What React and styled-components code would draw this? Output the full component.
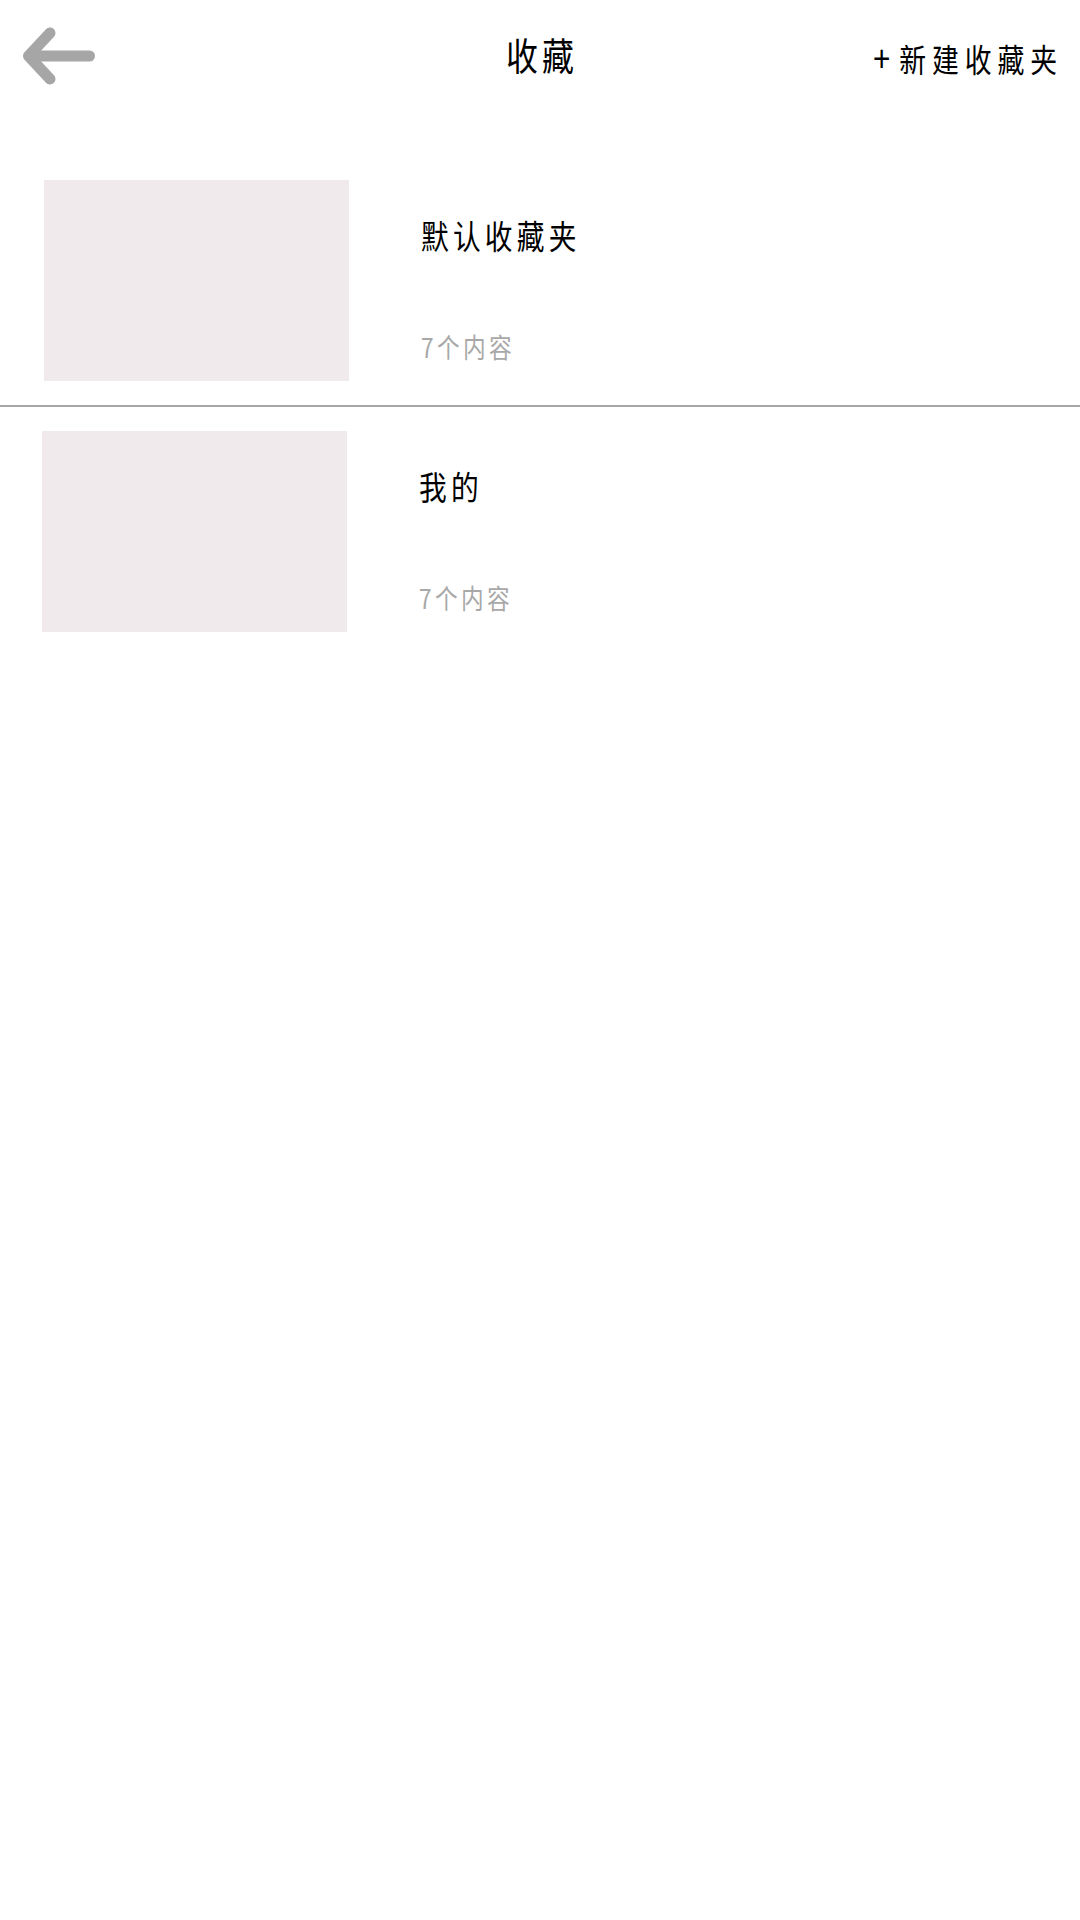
import React from "react";
import styled, { createGlobalStyle } from "styled-components";

const GlobalStyle = createGlobalStyle`
  html, body {
    margin: 0;
    padding: 0;
    background: #ffffff;
  }
  body {
    font-family: "Noto Sans CJK SC", "Noto Sans", sans-serif;
  }
`;

const folders = [
  { id: 1, name: "默认收藏夹", count: 7 },
  { id: 2, name: "我的", count: 7, shift: -2 },
];

const App = () => {
  return (
    <Page>
      <GlobalStyle />
      <Header>
        <BackButton type="button" aria-label="返回">
          <svg width="96" height="72" viewBox="0 0 96 72">
            <path
              d="M16.5 37 H77.5 M38 14 L16.5 37 L38 60"
              fill="none"
              stroke="#a6a6a6"
              strokeWidth="11"
              strokeLinecap="round"
              strokeLinejoin="round"
            />
          </svg>
        </BackButton>
        <Title>
          <Squeeze $origin="center" $size={38} $spacing={5}>
            收藏
          </Squeeze>
        </Title>
        <NewButton type="button">
          <Squeeze $origin="right" $size={32} $spacing={7}>
            <Plus>+</Plus>新建收藏夹
          </Squeeze>
        </NewButton>
      </Header>

      <List>
        {folders.map((f, i) => (
          <Row key={f.id} $divider={i < folders.length - 1} $shift={f.shift || 0}>
            <Thumb />
            <Info>
              <FolderName>
                <Squeeze $origin="left" $size={33} $spacing={5}>
                  {f.name}
                </Squeeze>
              </FolderName>
              <Count>
                <Squeeze $origin="left" $size={27} $spacing={4}>
                  {f.count}个内容
                </Squeeze>
              </Count>
            </Info>
          </Row>
        ))}
      </List>
    </Page>
  );
};

const Page = styled.div`
  width: 1080px;
  min-height: 1920px;
  background: #ffffff;
`;

const Header = styled.header`
  display: grid;
  grid-template-columns: 1fr auto 1fr;
  align-items: center;
  height: 110px;
  padding: 0 24px;
  box-sizing: border-box;
`;

const BackButton = styled.button`
  justify-self: start;
  display: flex;
  padding: 0;
  margin-left: -12px;
  border: none;
  background: none;
  cursor: pointer;
`;

const Title = styled.h1`
  margin: 0;
  font-weight: 400;
  color: #000;
  line-height: 44px;
`;

const NewButton = styled.button`
  justify-self: end;
  margin-top: 12px;
  padding: 0;
  border: none;
  background: none;
  color: #000;
  font-family: inherit;
  line-height: 40px;
  cursor: pointer;
`;

const Plus = styled.span`
  font-size: 36px;
  margin-right: 4px;
`;

const Squeeze = styled.span`
  display: inline-block;
  font-size: ${(p) => p.$size}px;
  letter-spacing: ${(p) => p.$spacing}px;
  margin-right: ${(p) => -p.$spacing}px;
  transform: scaleX(0.84);
  transform-origin: ${(p) => p.$origin} center;
  white-space: nowrap;
`;

const List = styled.ul`
  list-style: none;
  margin: 46px 0 0;
  padding: 0;
`;

const Row = styled.li`
  display: flex;
  padding: 24px 0 24px ${(p) => 44 + p.$shift}px;
  border-bottom: ${(p) => (p.$divider ? "2px solid #a6a6a6" : "none")};
`;

const Thumb = styled.div`
  width: 305px;
  height: 201px;
  background: #f0eaec;
  flex-shrink: 0;
`;

const Info = styled.div`
  display: flex;
  flex-direction: column;
  justify-content: space-between;
  margin-left: 72px;
  padding: 35px 0 14px;
`;

const FolderName = styled.div`
  color: #000;
  line-height: 40px;
`;

const Count = styled.div`
  color: #a8a8a8;
  line-height: 32px;
`;

export default App;
